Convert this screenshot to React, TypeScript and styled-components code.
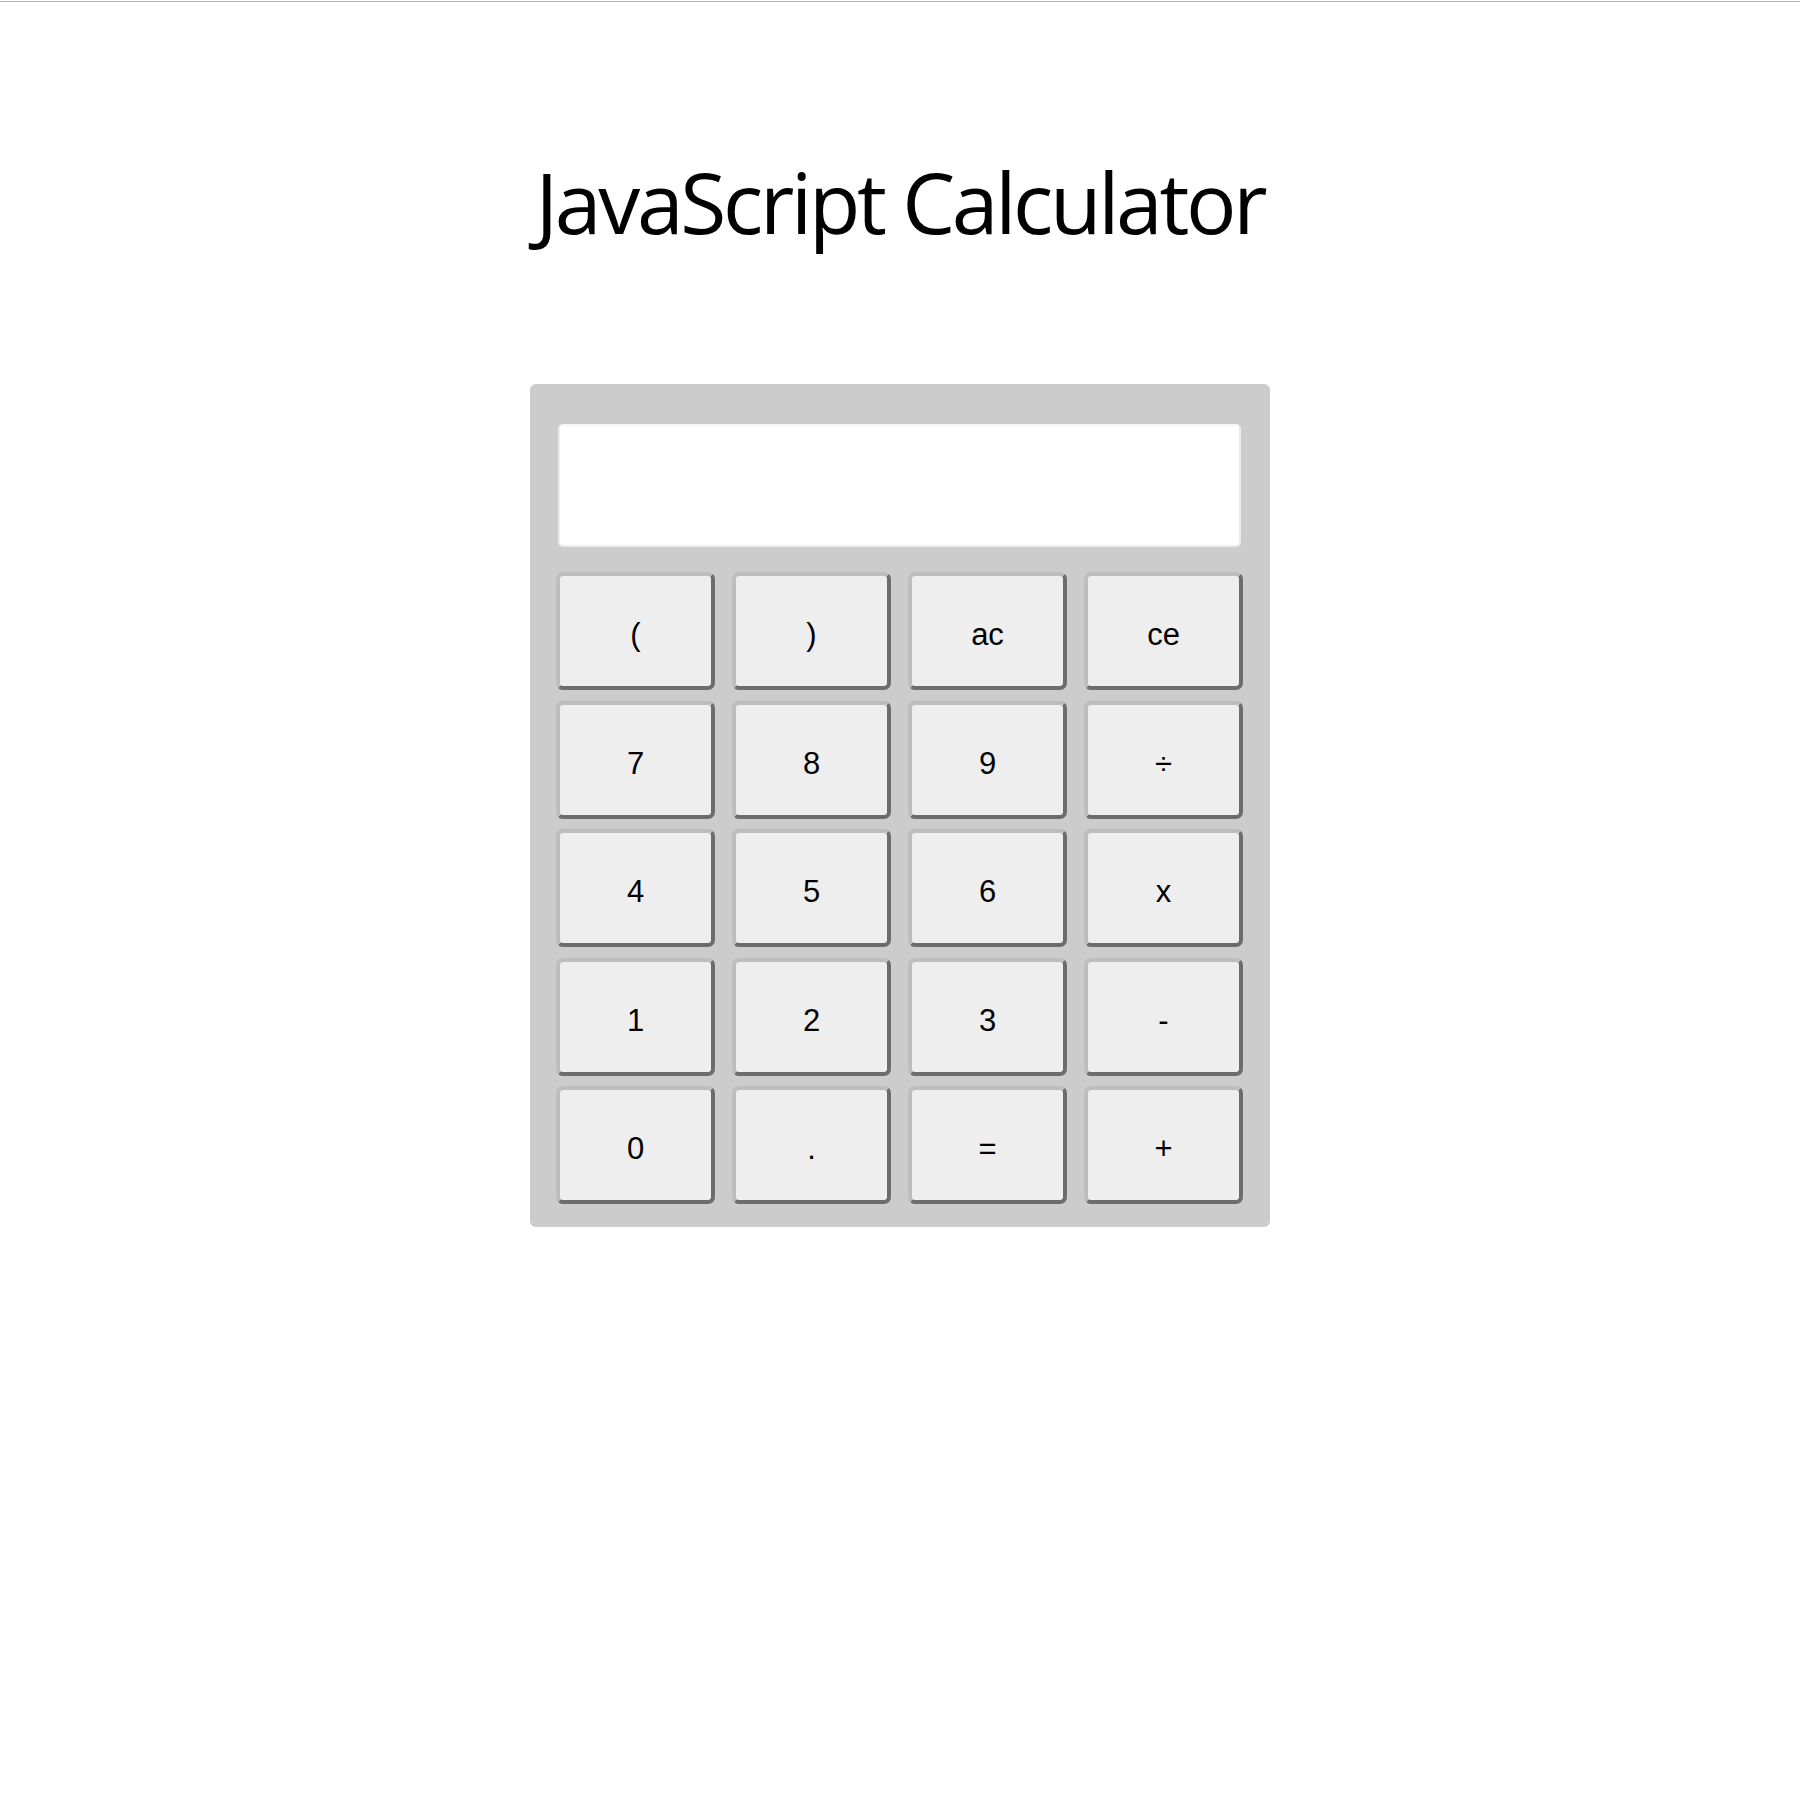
import React from "react";
import styled, { createGlobalStyle } from "styled-components";

const Global = createGlobalStyle`
  html, body { margin: 0; padding: 0; background: #ffffff; }
  body { font-family: "Liberation Sans", Arial, sans-serif; }
`;

const Page = styled.div`
  display: flex;
  flex-direction: column;
  align-items: center;
  min-height: 1800px;
`;

const TopRule = styled.div`
  align-self: stretch;
  height: 1px;
  margin-top: 1px;
  background: #b4b4b4;
`;

const Title = styled.h1`
  margin: 140px 0 0 0;
  font-family: "Open Sans", sans-serif;
  font-weight: 500;
  font-size: 84px;
  line-height: 120px;
  color: #000;
  letter-spacing: -3.3px;
`;

const Panel = styled.div`
  margin-top: 122px;
  width: 740px;
  box-sizing: border-box;
  padding: 40px 27px 23px 26px;
  background: #cccccc;
  border-radius: 6px;
  display: flex;
  flex-direction: column;
`;

const Display = styled.div`
  margin: 0 2px;
  height: 123px;
  box-sizing: border-box;
  background: #ffffff;
  border: 2px solid #ececec;
  border-top-color: #f6f6f6;
  border-radius: 5px;
`;

const Keypad = styled.div`
  margin-top: 25px;
  display: grid;
  grid-template-columns: repeat(4, 1fr);
  grid-auto-rows: 118px;
  column-gap: 17px;
  row-gap: 10.5px;
`;

const Key = styled.button`
  box-sizing: border-box;
  margin: 0;
  padding: 8px 0 0 0;
  background: #eeeeee;
  border-style: solid;
  border-width: 4px;
  border-color: #bdbdbd #6c6c6c #6c6c6c #bdbdbd;
  border-radius: 7px;
  font-family: "Liberation Sans", Arial, sans-serif;
  font-size: 31px;
  color: #000;
  cursor: pointer;
`;

const keys = [
  "(", ")", "ac", "ce",
  "7", "8", "9", "÷",
  "4", "5", "6", "x",
  "1", "2", "3", "-",
  "0", ".", "=", "+",
];

export default function App() {
  return (
    <>
      <Global />
      <Page>
        <TopRule />
        <Title>JavaScript Calculator</Title>
        <Panel>
          <Display />
          <Keypad>
            {keys.map((k) => (
              <Key key={k}>{k}</Key>
            ))}
          </Keypad>
        </Panel>
      </Page>
    </>
  );
}
